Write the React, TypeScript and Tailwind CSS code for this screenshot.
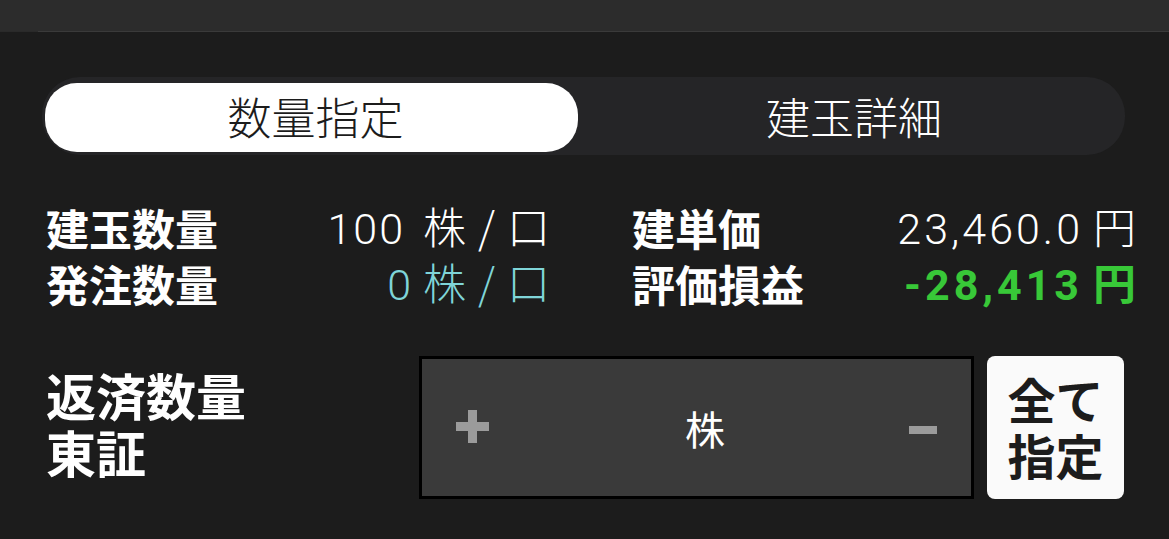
import React from "react";

function Unit() {
  return (
    <>
      株<span className="mx-[12px]">/</span>口
    </>
  );
}

export default function App() {
  return (
    <div className="w-[1169px] h-[539px] overflow-hidden bg-[#1c1c1c] flex flex-col font-['Noto_Sans_CJK_JP',sans-serif] text-white">
      {/* top bar */}
      <div className="h-[31px] bg-[#2c2c2c]" />
      <div className="h-px bg-[#2a2a2a] flex">
        <div className="w-[38px]" />
        <div className="flex-1 bg-[#3a3a3a]" />
      </div>

      {/* segmented control */}
      <div className="mt-[45px] ml-[42px] mr-[44px] h-[78px] rounded-[38px] bg-[#252527] pl-[3px] pr-[3px] pt-[6px] pb-[3px] flex">
        <div className="w-[533px] rounded-[32px] bg-white flex items-center justify-center text-[#1c1c1c] text-[44px] font-light leading-none pb-[4px] pl-[8px]">
          数量指定
        </div>
        <div className="flex-1 flex items-center justify-center text-[44px] font-light leading-none text-white pb-[4px] pl-[8px]">
          建玉詳細
        </div>
      </div>

      {/* info grid */}
      <div className="mt-[44px] pl-[46px] pr-[33px] grid grid-cols-2 gap-x-[82px] leading-[52px]">
        <div className="flex justify-between items-center">
          <span className="text-[43px] font-bold">建玉数量</span>
          <span className="text-[43px] font-light">
            <span className="font-['Roboto',sans-serif] font-light tracking-[2px] mr-[18px]">100</span>
            <Unit />
          </span>
        </div>
        <div className="flex justify-between items-center">
          <span className="text-[43px] font-bold">建単価</span>
          <span className="text-[43px] font-light">
            <span className="font-['Roboto',sans-serif] font-light tracking-[3px] mr-[10px]">23,460.0</span>円
          </span>
        </div>
        <div className="flex justify-between items-center">
          <span className="text-[43px] font-bold">発注数量</span>
          <span className="text-[43px] font-light text-[#7fd5d8]">
            <span className="font-['Roboto',sans-serif] font-light mr-[12px]">0</span>
            <Unit />
          </span>
        </div>
        <div className="flex justify-between items-center">
          <span className="text-[43px] font-bold">評価損益</span>
          <span className="text-[43px] font-bold text-[#38c838]">
            <span className="font-['Roboto',sans-serif] font-bold tracking-[4px] mr-[10px]">-28,413</span>円
          </span>
        </div>
      </div>

      {/* quantity row */}
      <div className="mt-[45px] pl-[46px] flex items-center">
        <div className="w-[373px] text-[50px] font-bold leading-[57px] -mt-[10px]">
          <div>返済数量</div>
          <div>東証</div>
        </div>
        <div className="w-[555px] h-[143px] border-[3px] border-black bg-[#3a3a3a] flex items-center pl-[34px] pr-[34px]">
          <div className="relative w-[33px] h-[33px] -mt-[2px]">
            <div className="absolute left-0 top-[12px] w-[33px] h-[9px] bg-[#9b9b9b]" />
            <div className="absolute left-[12px] top-0 w-[9px] h-[33px] bg-[#9b9b9b]" />
          </div>
          <div className="flex-1 flex justify-center pl-[12px]">
            <span className="text-[40px] leading-none">株</span>
          </div>
          <div className="w-[28px] h-[8px] bg-[#9b9b9b] mt-[4px]" />
        </div>
        <div className="ml-[13px] w-[137px] h-[143px] rounded-[8px] bg-[#fafafa] flex flex-col items-center justify-center text-[#1c1c1c] text-[48px] font-bold leading-[56px] pb-[4px]">
          <div>全て</div>
          <div>指定</div>
        </div>
      </div>
    </div>
  );
}
